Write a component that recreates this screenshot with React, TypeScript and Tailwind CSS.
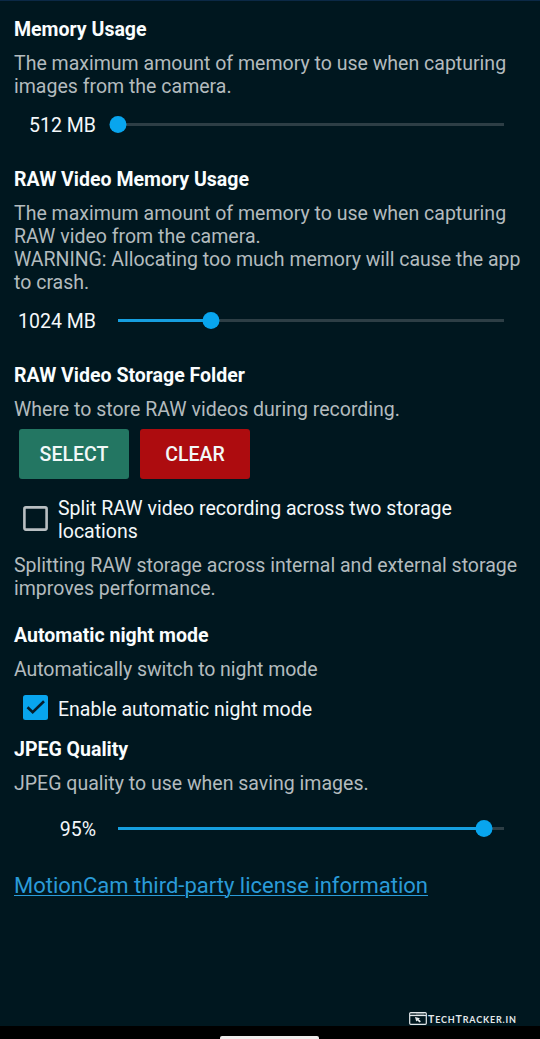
import type { ReactNode } from 'react';

function Heading({ children }: { children: ReactNode }) {
  return <h2 className="whitespace-nowrap font-bold text-[#fafdfe]">{children}</h2>;
}

function Description({ children }: { children: ReactNode }) {
  return <p className="mt-[10.5px] whitespace-nowrap text-[#b3bbbe]">{children}</p>;
}

function Slider({ label, percent }: { label: string; percent: number }) {
  return (
    <div className="flex h-[23px] items-center">
      <span className="w-[82px] whitespace-nowrap pt-px text-right text-[#f4f8fa]">{label}</span>
      <div className="relative -top-px ml-[22px] h-[3px] w-[386px] bg-[#2d3e45]">
        <div className="h-full bg-[#169fdf]" style={{ width: `${percent}%` }} />
        <div
          className="absolute -top-[7px] size-[17px] -translate-x-1/2 rounded-full bg-[#08a5ee]"
          style={{ left: `${percent}%` }}
        />
      </div>
    </div>
  );
}

function CheckBox({ checked }: { checked?: boolean }) {
  return (
    <svg className="-mt-1 size-[25px] shrink-0" viewBox="0 0 25 25" fill="none">
      {checked ? (
        <>
          <rect width="25" height="25" rx="2.5" fill="#08a5ee" />
          <path d="M4.5 12.2 9.7 17.2 21 6.2" stroke="#061d2b" strokeWidth="2.6" />
        </>
      ) : (
        <rect x="1.4" y="1.4" width="22.2" height="22.2" rx="1.5" stroke="#b9bfc2" strokeWidth="2.6" />
      )}
    </svg>
  );
}

function Watermark() {
  return (
    <div className="flex items-center gap-px text-[#e3e8ea]">
      <svg className="h-[13px] w-[18px]" viewBox="0 0 18 13" fill="none" stroke="currentColor">
        <rect x="0.7" y="0.7" width="16.6" height="11.6" rx="1" strokeWidth="1.2" />
        <path d="M1 3.5h16" strokeWidth="1.2" />
        <path d="M2.5 2h1M4.5 2h1M6.5 2h9" strokeWidth="0.7" />
        <path d="m6 5 1.2 4.4 1.2-1 2.2 2.2 1.3-1.3-2.2-2 1.3-1z" fill="currentColor" stroke="none" />
      </svg>
      <span className="mt-[3px] w-[88px] whitespace-nowrap font-[Lato] text-[9px] font-bold leading-[12px] tracking-[0.83px]">
        <span className="text-[10.5px]">T</span>ECH<span className="text-[10.5px]">T</span>RACKER.IN
      </span>
    </div>
  );
}

export default function App() {
  return (
    <div className="flex h-[1039px] w-[540px] flex-col overflow-hidden border-t border-[#0b2946] bg-[#00171f] font-[Roboto,sans-serif] text-[19.52px] leading-[23px]">
      <main className="flex flex-1 flex-col px-3.5 pt-[17px]">
        <section className="h-[150px]">
          <Heading>Memory Usage</Heading>
          <Description>
            The maximum amount of memory to use when capturing
            <br />
            images from the camera.
          </Description>
          <div className="mt-4">
            <Slider label="512 MB" percent={0} />
          </div>
        </section>

        <section className="h-[196px]">
          <Heading>RAW Video Memory Usage</Heading>
          <Description>
            The maximum amount of memory to use when capturing
            <br />
            RAW video from the camera.
            <br />
            <span className="tracking-[-0.04px]">WARNING: Allocating too much memory will cause the app</span>
            <br />
            to crash.
          </Description>
          <div className="mt-4">
            <Slider label="1024 MB" percent={24} />
          </div>
        </section>

        <section className="h-[260px]">
          <Heading>RAW Video Storage Folder</Heading>
          <Description>Where to store RAW videos during recording.</Description>
          <div className="mt-[8.5px] flex gap-[11px] pl-[5px] font-medium text-[#f2f8f8]">
            <button className="h-[50px] w-[110px] rounded-[3px] bg-[#237662] pt-px">SELECT</button>
            <button className="h-[50px] w-[110px] rounded-[3px] bg-[#ad0c0f] pt-px">CLEAR</button>
          </div>
          <label className="mt-[18px] flex items-center gap-[10px] whitespace-nowrap pl-[9px] text-[#f4f8fa]">
            <CheckBox />
            <span>
              Split RAW video recording across two storage
              <br />
              locations
            </span>
          </label>
          <Description>
            Splitting RAW storage across internal and external storage
            <br />
            improves performance.
          </Description>
        </section>

        <section className="h-[114px]">
          <Heading>Automatic night mode</Heading>
          <Description>
            <span className="tracking-[-0.07px]">Automatically switch to night mode</span>
          </Description>
          <label className="mt-[17px] flex h-[23px] items-center gap-[10px] whitespace-nowrap pl-[9px] text-[#f4f8fa]">
            <CheckBox checked />
            <span>Enable automatic night mode</span>
          </label>
        </section>

        <section className="h-[135px]">
          <Heading>JPEG Quality</Heading>
          <Description>JPEG quality to use when saving images.</Description>
          <div className="mt-[23px]">
            <Slider label="95%" percent={94.8} />
          </div>
        </section>

        <a
          href="#licenses"
          className="self-start whitespace-nowrap text-[22px] leading-[26px] text-[#2a9bd8] underline decoration-1 underline-offset-2"
        >
          MotionCam third-party license information
        </a>
        <div className="mt-auto flex justify-end pr-2.5">
          <Watermark />
        </div>
      </main>
      <footer className="flex h-[13px] items-end bg-black pl-[220px]">
        <div className="h-[3px] w-[99px] rounded-t-[2px] bg-[#f0eeee]" />
      </footer>
    </div>
  );
}
